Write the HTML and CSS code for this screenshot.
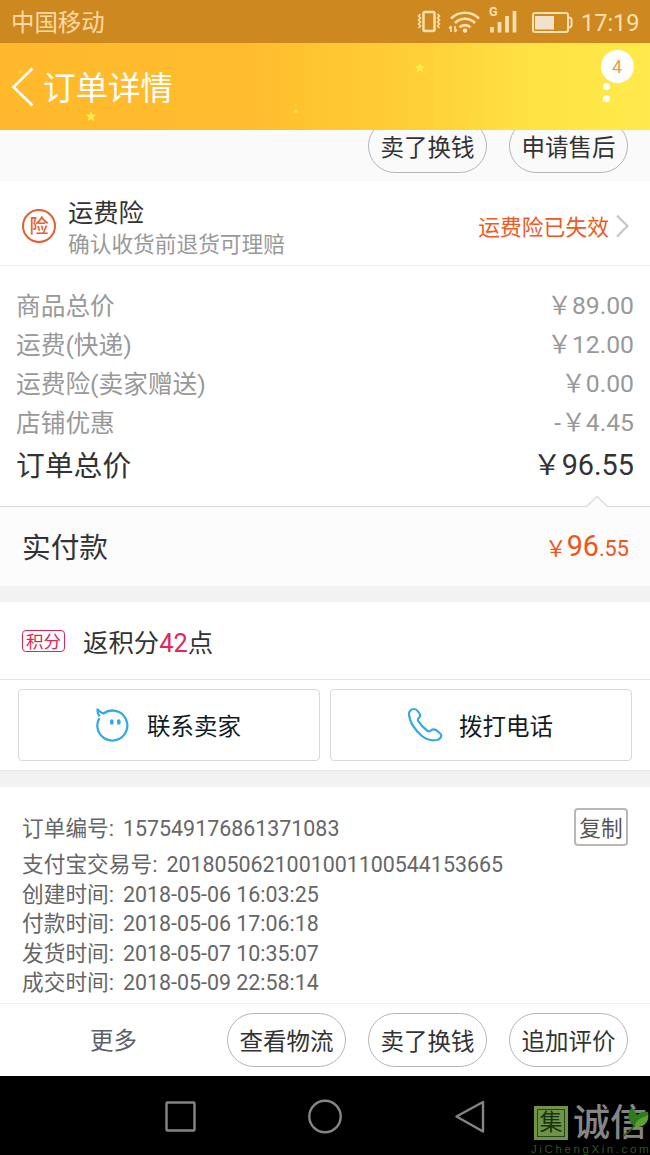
FILE: index.html
```html
<!DOCTYPE html>
<html lang="zh-CN">
<head>
<meta charset="utf-8">
<title>订单详情</title>
<link rel="stylesheet" href="styles.css">
</head>
<body>
<div class="status">
  <span class="carrier">中国移动</span>
  <svg class="status-icons" width="160" height="43" viewBox="0 0 160 43" fill="none" stroke="#ffe1b0" stroke-width="2">
    <rect x="8.500" y="12" width="11" height="19" rx="1.5" stroke-width="2.400"/>
    <path d="M5.500 14l-2 2 2 2-2 2 2 2-2 2 2 2-2 2M22.500 14l2 2-2 2 2 2-2 2 2 2-2 2 2 2" stroke-width="1.600"/>
    <path d="M36 18.500a20 20 0 0 1 28 0M40 23a14 14 0 0 1 20 0M44.500 27.300a8 8 0 0 1 11 0" stroke-width="2.600"/>
    <circle cx="50" cy="30.500" r="2.200" fill="#ffe1b0" stroke="none"/>
    <path d="M36 26v6M34 28.500l2-2.500M40 26v6M40 32l2-2.500" stroke-width="1.500"/>
    <path d="M77 27v5.500M84.500 22v10.500M92 16v16.500M99.500 11v21.500" stroke-width="3.700"/>
    <rect x="118" y="13" width="35" height="19" rx="2"/>
    <path d="M154 17l2.500 2v7l-2.500 2" />
    <rect x="120" y="16" width="19" height="13.500" fill="#f2e2cc" stroke="none"/>
  </svg>
  <span class="network">G</span>
  <span class="clock">17:19</span>
</div>

<header class="header">
  <svg class="sparkles" width="650" height="87" viewBox="0 0 650 87" fill="#fff04a">
    <path d="M91 68l1.500 3.400 3.700.4-2.800 2.500.8 3.700-3.200-1.900-3.200 1.900.8-3.700-2.800-2.500 3.700-.4z"/>
    <path d="M420 20l1.400 3.100 3.400.4-2.500 2.300.7 3.400-3-1.700-3 1.700.7-3.400-2.500-2.300 3.400-.4z"/>
    <path d="M296 66l3 3-3 1-3-1zM20 28l2 1.500-2 1-2-1z" opacity=".7"/>
  </svg>
  <svg class="back" width="24" height="40" viewBox="0 0 24 40" fill="none" stroke="#fff" stroke-width="2.600"><path d="M21.500 1.500L2.500 20l19 18.500"/></svg>
  <h1 class="title">订单详情</h1>
  <div class="menu">
    <span class="badge">4</span>
    <span class="dot"></span>
    <span class="dot"></span>
  </div>
</header>

<div class="item-actions">
  <span class="pill">卖了换钱</span>
  <span class="pill">申请售后</span>
</div>

<section class="insurance">
  <span class="seal">险</span>
  <div class="insurance-text">
    <div class="insurance-name">运费险</div>
    <div class="insurance-note">确认收货前退货可理赔</div>
  </div>
  <span class="insurance-state">运费险已失效</span>
  <svg class="chevron" width="13" height="24" viewBox="0 0 13 24" fill="none" stroke="#c6c6c6" stroke-width="2.200"><path d="M1 1.500L11.500 12 1 22.500"/></svg>
</section>

<section class="prices">
  <div class="row"><span>商品总价</span><span>￥89.00</span></div>
  <div class="row"><span>运费(快递)</span><span>￥12.00</span></div>
  <div class="row"><span>运费险(卖家赠送)</span><span>￥0.00</span></div>
  <div class="row"><span>店铺优惠</span><span>-￥4.45</span></div>
  <div class="row total"><span>订单总价</span><span>￥96.55</span></div>
</section>

<section class="paid">
  <svg class="notch" width="24" height="13" viewBox="0 0 24 13"><path d="M1 12L12 1.500 23 12v1H1z" fill="#fcfcfc"/><path d="M0 11.500h1.500L12 1.500l10.500 10H24" fill="none" stroke="#dcdcdc" stroke-width="1.300"/></svg>
  <span class="paid-label">实付款</span>
  <span class="paid-sum">￥<b class="whole">96</b>.55</span>
</section>

<section class="points">
  <span class="tag">积分</span>
  <span class="points-text">返积分<b class="points-count">42</b>点</span>
</section>

<section class="contact">
  <div class="button">
    <svg width="36" height="36" viewBox="0 0 36 36" fill="none" stroke="#35a9e6" stroke-width="2.300" stroke-linejoin="round" stroke-linecap="round"><path d="M4 12C2.500 15 2 17 2.400 20a15 15 0 1 0 6-13.500C6.500 6 4.500 4.500 2.500 2.500 2.500 5 3 7 4 8.500"/><path d="M16.800 14v2M23.800 14v2" stroke-width="3.600"/></svg>
    <span>联系卖家</span>
  </div>
  <div class="button">
    <svg width="36" height="36" viewBox="0 0 36 36" fill="none" stroke="#35a9e6" stroke-width="2.200" stroke-linejoin="round"><path d="M7 2C4 2 1.500 4.500 2 8c1 8 6 15 13 21 5 4 10 5 15 4 3-.7 5-3.500 4-5.500-.8-1.500-3-3-5-4.500-2-1-4-.5-5 .5-1 1-2.500 1-4 0-4-3-7-6.500-9-10-.8-1.500 1-2.500 2-4 .8-1.500-.5-3-2-5C10 3 8.500 2 7 2z"/></svg>
    <span>拨打电话</span>
  </div>
</section>

<section class="order">
  <div class="line first"><span class="key">订单编号:</span><span class="value">157549176861371083</span><span class="copy">复制</span></div>
  <div class="line"><span class="key">支付宝交易号:</span><span class="value">2018050621001001100544153665</span></div>
  <div class="line"><span class="key">创建时间:</span><span class="value">2018-05-06 16:03:25</span></div>
  <div class="line"><span class="key">付款时间:</span><span class="value">2018-05-06 17:06:18</span></div>
  <div class="line"><span class="key">发货时间:</span><span class="value">2018-05-07 10:35:07</span></div>
  <div class="line"><span class="key">成交时间:</span><span class="value">2018-05-09 22:58:14</span></div>
</section>

<footer class="footer">
  <span class="more">更多</span>
  <span class="pill">查看物流</span>
  <span class="pill">卖了换钱</span>
  <span class="pill">追加评价</span>
</footer>

<nav class="nav">
  <svg class="nav-keys" width="324" height="36" viewBox="0 0 324 36" fill="none" stroke="#858585" stroke-width="2.400" stroke-linejoin="round"><rect x="3.500" y="4.500" width="28" height="28" rx="1"/><circle cx="162" cy="18.500" r="15.700"/><path d="M293.500 18.500L320 4v29.500z"/></svg>
  <div class="watermark">
    <div class="mark">
      <span class="mark-seal">集</span>
      <span class="mark-name">诚信</span>
    </div>
    <div class="mark-site">JiChengXin.com</div>
    <svg class="leaf" width="32" height="34" viewBox="0 0 32 34"><path d="M1 30c5-3 9-7 12-12" fill="none" stroke="#315b20" stroke-width="1.500"/><path d="M13 21C5 14 5 8 9 2c3 2 5 4 6 7 3-3 7-4 11-3 2 8-3 15-13 15z" fill="#2f7a1c"/><path d="M13 21c0-7 6-9 13-12 1 7-4 13-13 12z" fill="#5ea030"/></svg>
  </div>
</nav>
</body>
</html>
```

FILE: styles.css
```css
* { box-sizing: border-box; }
body {
  margin: 0;
  width: 650px;
  height: 1155px;
  overflow: hidden;
  background: #fff;
  color: #333;
  font-family: Roboto, "Noto Sans CJK SC", sans-serif;
  font-weight: 400;
  white-space: nowrap;
}
b { font-weight: 400; }
svg { display: block; flex: none; }

.status {
  position: relative;
  display: flex;
  align-items: center;
  height: 43px;
  padding: 0 12px 0 11px;
  background: #cd8820;
  color: #ffe1b0;
}
.carrier { padding-top: 3px; font-size: 23.4px; line-height: 40px; color: #ffd9a6; }
.status-icons { margin-left: auto; }
.network { position: absolute; left: 489px; top: 5px; font-size: 12.5px; line-height: 14px; font-weight: 700; }
.clock { margin-left: 6px; padding-top: 2px; font-size: 23.5px; line-height: 42px; width: 57px; }

.header {
  position: relative;
  display: flex;
  align-items: center;
  height: 87px;
  padding-left: 11px;
  background: linear-gradient(90deg, #ffb92b 0%, #ffbd2d 38%, #ffd139 66%, #ffe143 80%, #ffea4b 100%);
  color: #fff;
}
.sparkles { position: absolute; left: 0; top: 0; }
.back { position: relative; }
.title { position: relative; margin: 5px 0 0 8px; font-size: 32.5px; line-height: 48px; font-weight: 400; }
.menu {
  display: flex;
  flex-direction: column;
  align-items: center;
  align-self: flex-start;
  gap: 5px;
  width: 34px;
  margin: 7px 16px 0 auto;
}
.badge { width: 33px; height: 33px; border-radius: 50%; background: #fff; color: #e5a04a; font-size: 18px; line-height: 34px; text-align: center; margin-bottom: -5px; }
.dot { width: 7px; height: 7px; border-radius: 50%; background: #fff; margin-right: 22px; }

.pill {
  width: 119px;
  height: 54px;
  padding-top: 2px;
  border: 1px solid #b5b5b5;
  border-radius: 27px;
  font-size: 23.5px;
  line-height: 53px;
  text-align: center;
}
.item-actions {
  display: flex;
  justify-content: flex-end;
  align-items: flex-end;
  gap: 22px;
  height: 51px;
  padding: 0 22px 8px 0;
  background: #fafafa;
  overflow: hidden;
}

.insurance {
  display: flex;
  align-items: center;
  height: 85px;
  padding: 0 21px 0 22px;
  border-bottom: 1px solid #ebebeb;
}
.seal { width: 34px; height: 34px; margin-top: 5px; border: 2px solid #e2622f; border-radius: 50%; color: #e2622f; font-size: 19px; line-height: 31px; text-align: center; font-weight: 500; }
.insurance-text { margin-left: 12px; padding-top: 10px; }
.insurance-name { font-size: 25.3px; line-height: 33px; }
.insurance-note { font-size: 21.7px; line-height: 30px; color: #999; }
.insurance-state { margin: 9px 7px 0 auto; font-size: 21.8px; line-height: 30px; color: #ee5a24; }
.chevron { margin-top: 5px; }

.prices { height: 240px; padding: 21px 16px 0; color: #999; }
.row { display: flex; justify-content: space-between; font-size: 24.700px; line-height: 39px; height: 39px; }
.row.total { font-size: 28.8px; line-height: 46px; color: #333; }
.row span:last-child { margin-top: -1px; }

.paid {
  position: relative;
  display: flex;
  justify-content: space-between;
  align-items: center;
  height: 80px;
  padding: 0 21px 0 22px;
  border-top: 1px solid #dcdcdc;
  background: #fcfcfc;
}
.notch { position: absolute; left: 585px; top: -12px; }
.paid-label { padding-top: 2px; font-size: 28.7px; line-height: 40px; }
.paid-sum { padding-top: 1px; font-size: 21.700px; line-height: 40px; color: #ee5519; }
.whole { font-size: 28.7px; }

.points {
  display: flex;
  align-items: center;
  height: 94px;
  padding-left: 22px;
  border-top: 16px solid #f2f2f2;
  border-bottom: 1px solid #e6e6e6;
}
.tag { width: 43px; height: 22px; border: 1.500px solid #dd2755; border-radius: 4px; color: #dd2755; font-size: 17.5px; line-height: 22px; text-align: center; margin-top: 1px; }
.points-text { margin: 4px 0 0 18px; font-size: 25.4px; line-height: 36px; }
.points-count { color: #e22658; }

.contact { display: flex; gap: 10px; height: 91px; padding: 9px 18px; border-bottom: 1px solid #e8e8e8; }
.button {
  display: flex;
  align-items: center;
  flex: 1;
  gap: 16px;
  height: 72px;
  padding-left: 76px;
  border: 1px solid #d9d9d9;
  border-radius: 4px;
  color: #111b24;
  font-size: 23.5px;
  line-height: 34px;
}
.button span { padding-top: 4px; }

.order { height: 232px; padding: 27px 22px 0; border-top: 16px solid #f2f2f2; color: #666; font-size: 21.7px; }
.line { display: flex; height: 29.5px; line-height: 29.5px; }
.line.first { height: 36px; }
.key { margin-right: 9px; }
.value { font-size: 21.4px; }
.copy { width: 54px; height: 38px; margin: -6px 0 0 auto; border: 2px solid #b8b8b8; border-radius: 4px; line-height: 37px; text-align: center; color: #555; }

.footer { display: flex; align-items: center; gap: 22px; height: 73px; padding-right: 22px; border-top: 1px solid #f0f0f0; }
.more { width: 227px; margin-right: -22px; padding-top: 3px; font-size: 23.5px; line-height: 53px; color: #5d6069; text-align: center; }

.nav { position: relative; height: 79px; padding: 22px 0 0 163px; background: #000; }
.watermark { position: absolute; left: 531px; top: 29px; width: 119px; height: 50px; }
.mark { display: flex; align-items: center; height: 36px; gap: 5px; }
.mark-seal { width: 34px; height: 34px; margin-left: 3px; flex: none; border: 2px solid #6f9448; outline: 1px solid #294616; outline-offset: -4px; background: #6f9448; color: #183311; font-size: 23px; line-height: 30px; text-align: center; }
.mark-name { padding-top: 2px; font-size: 37px; line-height: 34px; color: #858585; font-weight: 500; }
.mark-site { font-family: "Liberation Sans", sans-serif; font-size: 11.5px; line-height: 12px; letter-spacing: 2.6px; color: #315520; margin-top: 2px; }
.leaf { position: absolute; left: 91px; top: 1px; }
```
